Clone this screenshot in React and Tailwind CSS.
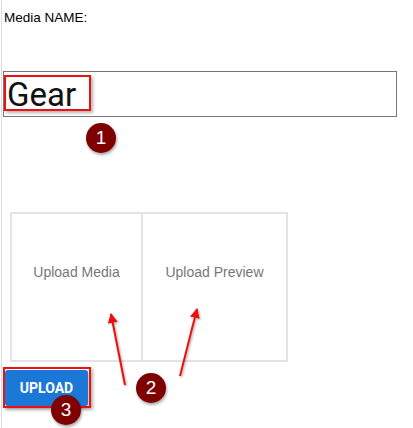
import React from 'react';

// Numbered annotation marker
const Marker = ({ n, className = '' }) => (
  <div
    className={`absolute w-[30px] h-[30px] rounded-full bg-[#7f0000] text-white flex items-center justify-center text-[19px] shadow-[1px_2px_3px_rgba(0,0,0,0.35)] ${className}`}
    style={{ fontFamily: 'Arial, "Liberation Sans", sans-serif' }}
  >
    {n}
  </div>
);

export default function App() {
  return (
    <div className="relative w-[413px] h-[428px] bg-white overflow-hidden">
      <div className="ml-px h-full border-l border-[#dcdcdc] flex flex-col">
        <label
          className="pl-[2px] pt-[10px] text-[13.5px] leading-[16px] text-black"
          style={{ fontFamily: '"Liberation Sans", Arial, sans-serif' }}
        >
          Media NAME:
        </label>

        <div className="mt-[45px] ml-px w-[394px] h-[46px] border border-[#777] flex items-center pl-[3px]">
          <span className="text-[33px] leading-none text-[#111]" style={{ fontFamily: 'Roboto, sans-serif' }}>
            Gear
          </span>
        </div>

        <div
          className="mt-[95px] ml-[8px] flex text-[14px] leading-[16px] text-[#777]"
          style={{ fontFamily: '"Liberation Sans", Arial, sans-serif' }}
        >
          <div className="w-[133px] h-[150px] border-2 border-[#e3e3e3] pt-[50px] text-center">
            Upload Media
          </div>
          <div className="w-[145px] h-[150px] border-2 border-l-0 border-[#e3e3e3] pt-[50px] text-center">
            Upload Preview
          </div>
        </div>

        <button
          className="mt-[8px] ml-[3px] w-[83px] h-[36px] rounded-[3px] bg-[#1c78d6] text-white text-[14px] font-bold shadow-[1px_2px_3px_rgba(0,0,0,0.3)] self-start"
          style={{ fontFamily: 'Roboto, sans-serif' }}
        >
          UPLOAD
        </button>
      </div>

      {/* annotations */}
      <div className="absolute left-[4px] top-[75px] w-[87px] h-[36px] border-2 border-[#ee1111] shadow-[2px_2px_3px_rgba(0,0,0,0.3)]" />
      <div className="absolute left-[3px] top-[367px] w-[88px] h-[41px] border-2 border-[#ee1111] shadow-[2px_2px_3px_rgba(0,0,0,0.3)]" />

      <svg className="absolute inset-0 pointer-events-none" width="413" height="428">
        <defs>
          <marker id="ah" viewBox="0 0 10 10" refX="9" refY="5" markerWidth="5" markerHeight="5" orient="auto">
            <path d="M0 0 L10 5 L0 10 z" fill="#ee1111" />
          </marker>
          <filter id="sh" x="-20%" y="-20%" width="140%" height="140%">
            <feDropShadow dx="1" dy="1" stdDeviation="0.8" floodOpacity="0.35" />
          </filter>
        </defs>
        <g filter="url(#sh)">
          <line x1="125" y1="385" x2="111" y2="314" stroke="#ee1111" strokeWidth="2" markerEnd="url(#ah)" />
          <line x1="180" y1="376" x2="197" y2="309" stroke="#ee1111" strokeWidth="2" markerEnd="url(#ah)" />
        </g>
      </svg>

      <Marker n="1" className="left-[86px] top-[123px]" />
      <Marker n="2" className="left-[136px] top-[373px]" />
      <Marker n="3" className="left-[51px] top-[395px]" />
    </div>
  );
}
